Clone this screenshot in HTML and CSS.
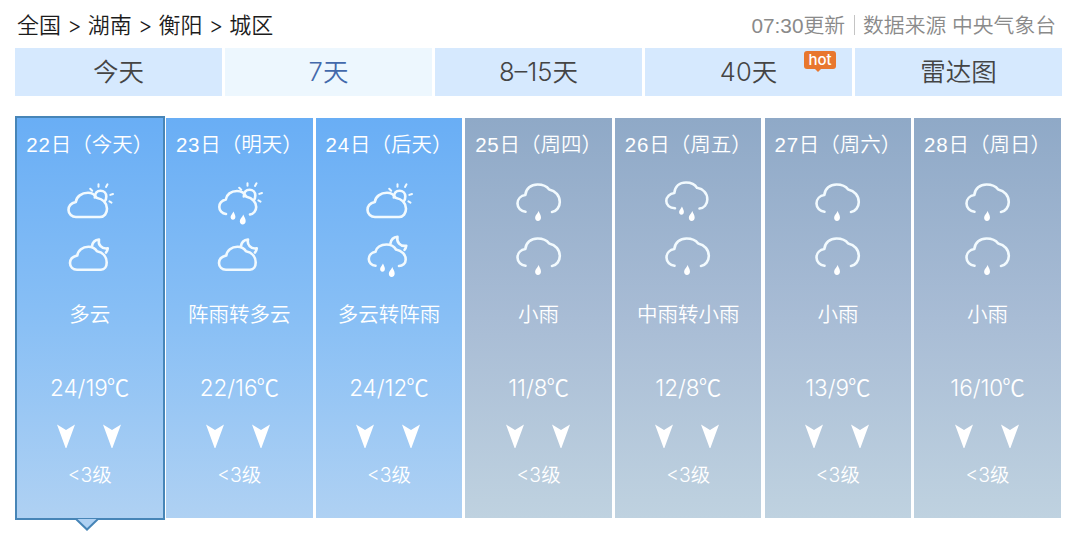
FILE: index.html
```html
<!DOCTYPE html>
<html lang="zh-CN">
    <head>
        <meta charset="utf-8">
        <title>衡阳天气</title>
        <link rel="stylesheet" href="styles.css">
    </head>
    <body>
        <svg class="defs" width="0" height="0">
            <symbol id="sun" viewBox="0 0 60 50">
                <path d="M34.8 20.5C35 16 37.500 13.800 40.500 13.800C44 13.800 46.300 16.500 46.300 19.500Q46.300 22.500 44.700 24.300"/>
                <path class="ray" d="M38.500 7.200V9.800M47.500 7.300L46 10M53 17L50.300 17.900M51.500 25.600L49.400 24.400M30.200 11.800L32.200 13.800"/>
            </symbol>
            <symbol id="moon" viewBox="0 0 60 50">
                <path d="M32 15C32.500 11.500 35.200 9 39 8.500C37.800 13.500 41.500 18.500 47.800 17.400C47.600 19 47.200 20.300 46 21.500"/>
            </symbol>
            <symbol id="drop" viewBox="0 0 8 12">
                <path class="fill" d="M4.600 0.500C5.600 3 7.200 5 7.200 7.600C7.200 10 5.800 11.500 3.900 11.500C2 11.500 0.800 10 0.800 8C0.800 5.200 3.400 3.600 4.600 0.500Z"/>
            </symbol>
            <symbol id="cloud-day" viewBox="0 0 60 50">
                <path d="M16 40H40C44.300 40 47 36.300 47 31.800C47 26.500 43.300 22 36.500 20.700C34.800 17.600 31.800 15.800 28 15.800C21.500 15.800 16.500 19.500 15.800 25C11.500 26 8.500 29 8.500 33C8.500 37 12 40 16 40Z"/>
                <use href="#sun" width="60" height="50"/>
            </symbol>
            <symbol id="cloud-night" viewBox="0 0 60 50">
                <path d="M17 38.700H41C44.700 38.700 46.700 35.500 46.700 31.500C46.700 26.200 43.300 21.500 37 20.300C35 17.300 32 15.800 28.500 15.800C22.500 15.800 18 19.300 17.300 24.500C12.800 25.500 10 28.300 10 32C10 36 13 38.700 17 38.700Z"/>
                <use href="#moon" width="60" height="50"/>
            </symbol>
            <symbol id="shower-day" viewBox="0 0 60 50">
                <path d="M17 37C13 36.800 10.300 33.500 10.300 30C10.300 26.500 13 23.500 16.800 22.500C17.500 17.500 22 14 28 14C32 14 35.500 16 37.500 19.800C43.500 21 47.200 25.500 47.200 30C47.200 33.800 44.500 37 41 37.500"/>
                <use href="#sun" y="-1" width="60" height="50"/>
                <use href="#drop" x="21" y="34" width="6" height="9"/>
                <use href="#drop" x="30" y="37" width="7.500" height="11"/>
            </symbol>
            <symbol id="shower-night" viewBox="0 0 60 50">
                <path d="M16.500 34.700C12.500 34.500 9.800 31.500 9.800 28C9.800 24.500 12.500 21.500 16.500 20.800C17.200 16.500 21.700 13.500 27.500 13.500C31.500 13.500 35 15 37 18.500C43 19.500 46.700 24 46.700 28.500C46.700 32.500 43.500 35 40 35"/>
                <use href="#moon" x="-0.500" y="-2.700" width="60" height="50"/>
                <use href="#drop" x="20.500" y="32" width="6" height="9"/>
                <use href="#drop" x="29" y="35.500" width="7.500" height="11"/>
            </symbol>
            <symbol id="light-rain" viewBox="0 0 60 50">
                <path d="M16.500 34.800C12 34.300 8.500 31 8.500 26.500C8.500 22 12 18.700 16.300 18C17 11.500 22 7.500 28.500 7.500C34 7.500 38 9.500 40.200 12.500C46.500 13.800 50.800 18.700 50.800 25C50.800 30 47.500 34.300 43 35"/>
                <use href="#drop" x="25.300" y="33.500" width="7.500" height="11"/>
            </symbol>
            <symbol id="mid-rain" viewBox="0 0 60 50">
                <path d="M17 31.300C11.500 31 8.300 28 8.300 24C8.300 19.700 12 16.500 16.300 16C17 9.500 21.500 5.500 28 5.500C33 5.500 37 7.500 39 10.800C45.500 12 49.300 16.500 49.300 22.500C49.300 27.500 46 31.200 41.500 31.500"/>
                <use href="#drop" x="20.500" y="29" width="6" height="9"/>
                <use href="#drop" x="30" y="33.500" width="7.500" height="11"/>
            </symbol>
            <symbol id="arrow" viewBox="0 0 20 26">
                <path class="fill" d="M1 1.500L10 7L19 1.500L10.400 25H9.600Z"/>
            </symbol>
        </svg>

        <div class="top">
            <div class="crumbs">全国 &gt; 湖南 &gt; 衡阳 &gt; 城区</div>
            <div class="source"><span>07:30更新</span><i class="line"></i><span>数据来源 中央气象台</span></div>
        </div>

        <div class="tabs">
            <div class="tab">今天</div>
            <div class="tab on">7天</div>
            <div class="tab">8–15天</div>
            <div class="tab">40天<span class="hot">hot</span></div>
            <div class="tab">雷达图</div>
        </div>

        <div class="days">
            <div class="day blue current">
                <h1><span class="num">22</span>日（今天）</h1>
                <svg class="icon"><use href="#cloud-day"/></svg>
                <svg class="icon"><use href="#cloud-night"/></svg>
                <p class="wea">多云</p>
                <p class="tem">24/19<span class="unit">℃</span></p>
                <p class="win"><svg class="arrow"><use href="#arrow"/></svg><svg class="arrow"><use href="#arrow"/></svg></p>
                <p class="level">&lt;3级</p>
                <svg class="pointer" viewBox="0 0 24 14"><path d="M1 1L12 11.500L23 1"/></svg>
            </div>
            <div class="day blue">
                <h1><span class="num">23</span>日（明天）</h1>
                <svg class="icon"><use href="#shower-day"/></svg>
                <svg class="icon"><use href="#cloud-night"/></svg>
                <p class="wea">阵雨转多云</p>
                <p class="tem">22/16<span class="unit">℃</span></p>
                <p class="win"><svg class="arrow"><use href="#arrow"/></svg><svg class="arrow"><use href="#arrow"/></svg></p>
                <p class="level">&lt;3级</p>
            </div>
            <div class="day blue">
                <h1><span class="num">24</span>日（后天）</h1>
                <svg class="icon"><use href="#cloud-day"/></svg>
                <svg class="icon"><use href="#shower-night"/></svg>
                <p class="wea">多云转阵雨</p>
                <p class="tem">24/12<span class="unit">℃</span></p>
                <p class="win"><svg class="arrow"><use href="#arrow"/></svg><svg class="arrow"><use href="#arrow"/></svg></p>
                <p class="level">&lt;3级</p>
            </div>
            <div class="day">
                <h1><span class="num">25</span>日（周四）</h1>
                <svg class="icon"><use href="#light-rain"/></svg>
                <svg class="icon"><use href="#light-rain"/></svg>
                <p class="wea">小雨</p>
                <p class="tem">11/8<span class="unit">℃</span></p>
                <p class="win"><svg class="arrow"><use href="#arrow"/></svg><svg class="arrow"><use href="#arrow"/></svg></p>
                <p class="level">&lt;3级</p>
            </div>
            <div class="day">
                <h1><span class="num">26</span>日（周五）</h1>
                <svg class="icon"><use href="#mid-rain"/></svg>
                <svg class="icon"><use href="#light-rain"/></svg>
                <p class="wea">中雨转小雨</p>
                <p class="tem">12/8<span class="unit">℃</span></p>
                <p class="win"><svg class="arrow"><use href="#arrow"/></svg><svg class="arrow"><use href="#arrow"/></svg></p>
                <p class="level">&lt;3级</p>
            </div>
            <div class="day">
                <h1><span class="num">27</span>日（周六）</h1>
                <svg class="icon"><use href="#light-rain"/></svg>
                <svg class="icon"><use href="#light-rain"/></svg>
                <p class="wea">小雨</p>
                <p class="tem">13/9<span class="unit">℃</span></p>
                <p class="win"><svg class="arrow"><use href="#arrow"/></svg><svg class="arrow"><use href="#arrow"/></svg></p>
                <p class="level">&lt;3级</p>
            </div>
            <div class="day">
                <h1><span class="num">28</span>日（周日）</h1>
                <svg class="icon"><use href="#light-rain"/></svg>
                <svg class="icon"><use href="#light-rain"/></svg>
                <p class="wea">小雨</p>
                <p class="tem">16/10<span class="unit">℃</span></p>
                <p class="win"><svg class="arrow"><use href="#arrow"/></svg><svg class="arrow"><use href="#arrow"/></svg></p>
                <p class="level">&lt;3级</p>
            </div>
        </div>
    </body>
</html>
```
FILE: styles.css
```css
body
{
    margin:0;
    height:533px;
    background:#fff;
    font-family:Inter,"Noto Sans CJK SC DemiLight","Noto Sans CJK SC",sans-serif;
    font-weight:350;
}
h1, p
{
    margin:0;
    font-weight:350;
}
.defs
{
    display:block;
}
.top
{
    display:flex;
    justify-content:space-between;
    height:48px;
    padding:0 24px 0 17px;
    line-height:51px;
    white-space:pre;
}
.crumbs
{
    font-size:22px;
    color:#1c1c1c;
}
.source
{
    display:flex;
    align-items:center;
    height:50px;
    font-family:"Liberation Sans","Noto Sans CJK SC DemiLight","Noto Sans CJK SC",sans-serif;
    font-size:20.8px;
    color:#8a8a8a;
}
.line
{
    width:1px;
    height:20px;
    margin:0 8.5px;
    background:#c4c4c4;
}
.tabs
{
    display:grid;
    grid-template-columns:repeat(5, 207px);
    gap:3px;
    padding-left:15px;
}
.tab
{
    position:relative;
    height:47.5px;
    background:#d6e9fe;
    color:#444;
    font-size:25.5px;
    line-height:48px;
    text-align:center;
}
.tab.on
{
    background:#edf7fe;
    color:#4369ab;
}
.hot
{
    position:absolute;
    top:3px;
    right:16px;
    width:32px;
    height:18px;
    border-radius:3px;
    background:#e8772e;
    color:#fff;
    font-size:15px;
    font-weight:500;
    line-height:18px;
}
.hot:after
{
    content:"";
    position:absolute;
    left:10px;
    top:17px;
    border:4px solid transparent;
    border-top-color:#e8772e;
    border-bottom:0;
}
.days
{
    display:flex;
    gap:3.25px;
    padding:22.5px 0 0 16.5px;
}
.day
{
    position:relative;
    display:flex;
    flex-direction:column;
    align-items:center;
    width:146.4px;
    height:400px;
    background:linear-gradient(#8fa9c7, #a8bcd5 50%, #bfd2e0);
    color:#fff;
}
.day.blue
{
    background:linear-gradient(#69aef5, #88bff5 50%, #afd1f3);
}
.day.current
{
    outline:2px solid #4785b7;
}
.day h1
{
    height:59px;
    font-size:20.5px;
    line-height:53px;
    white-space:nowrap;
}
.num
{
    font-family:"Liberation Sans",sans-serif;
    letter-spacing:0.8px;
}
.icon
{
    width:60px;
    height:50px;
    margin-bottom:4px;
    fill:none;
    stroke:#f2fafe;
    stroke-width:2.6;
    stroke-linecap:round;
    stroke-linejoin:round;
}
.ray
{
    stroke-width:2;
}
.fill
{
    fill:#fff;
    stroke:none;
}
.wea
{
    height:58px;
    font-size:20.5px;
    line-height:59px;
}
.tem
{
    height:80px;
    font-size:22.5px;
    line-height:90px;
}
.unit
{
    margin-left:-1px;
    font-family:"Noto Sans CJK SC DemiLight","Noto Sans CJK SC",sans-serif;
    line-height:1;
}
.win
{
    display:flex;
    gap:26px;
    height:26px;
    margin-right:2px;
}
.arrow
{
    width:20px;
    height:26px;
}
.level
{
    font-size:19.5px;
    line-height:53px;
}
.pointer
{
    position:absolute;
    left:58.5px;
    bottom:-14px;
    width:24px;
    height:14px;
    fill:#afd1f3;
    stroke:#4785b7;
    stroke-width:2;
}
```
